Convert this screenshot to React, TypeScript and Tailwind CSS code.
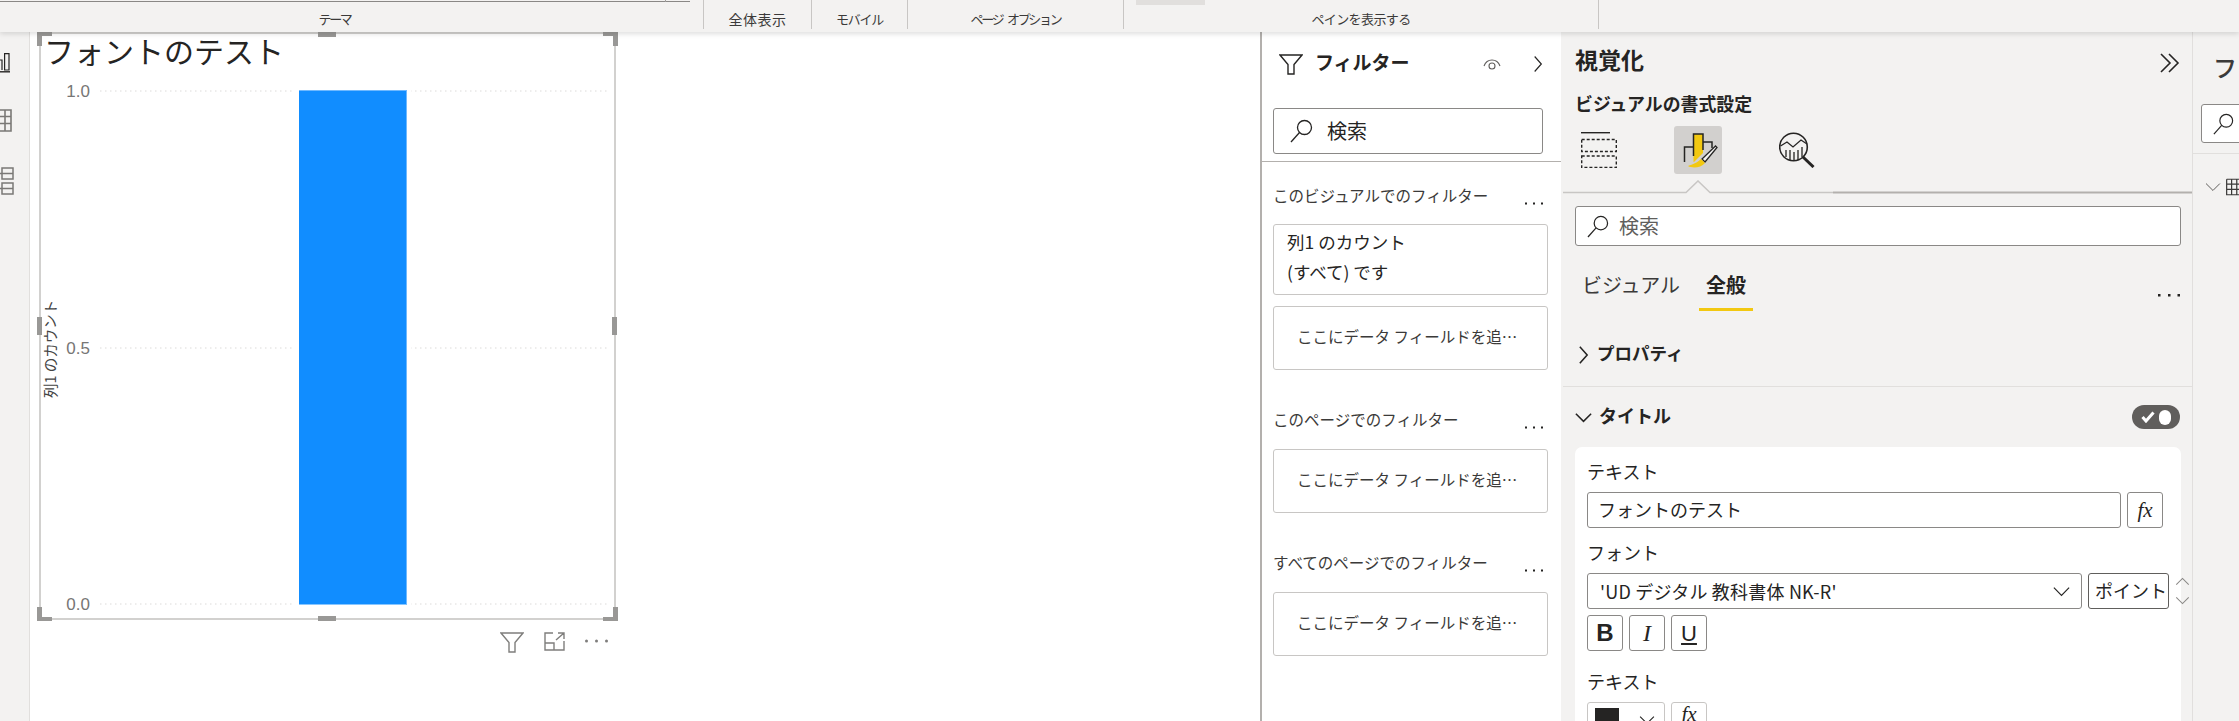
import React from "react";

const ink = "#252423";

function SearchIcon({ className = "w-[23px] h-[24px]" }: { className?: string }) {
  return (
    <svg viewBox="0 0 23 24" className={className} fill="none" stroke={ink} strokeWidth="1.3">
      <circle cx="14.5" cy="8.5" r="7" />
      <path d="M9.5 13.5 L1 23" />
    </svg>
  );
}

function Funnel({ className, color }: { className: string; color: string }) {
  return (
    <svg viewBox="0 0 24 21" className={className} fill="none" stroke={color} strokeWidth="1.4">
      <path d="M1 1 H23 L15 10.5 V20 H9 V10.5 Z" />
    </svg>
  );
}

function Dots({ color = ink }: { color?: string }) {
  return (
    <svg viewBox="0 0 18 3" className="w-[18px] h-[3px]" fill={color}>
      <rect x="0" y="0.5" width="2" height="2" />
      <rect x="8" y="0.5" width="2" height="2" />
      <rect x="16" y="0.5" width="2" height="2" />
    </svg>
  );
}

function Chevron({ dir, className, color = ink, sw = 1.5 }: { dir: "r" | "d" | "u"; className: string; color?: string; sw?: number }) {
  const d = dir === "r" ? "M2 1 L10 10 L2 19" : dir === "d" ? "M1 2 L10 11 L19 2" : "M1 11 L10 2 L19 11";
  const vb = dir === "r" ? "0 0 12 20" : "0 0 20 13";
  return (
    <svg viewBox={vb} className={className} fill="none" stroke={color} strokeWidth={sw}>
      <path d={d} />
    </svg>
  );
}

function RibbonGroup({ w, label, text }: { w: string; label: string; text: string }) {
  return (
    <div className={`${w} h-[29px] shrink-0 flex items-end justify-center leading-[20px] text-[#3b3a39] border-r border-[#c8c6c4]`}>
      <span className={`${text} whitespace-nowrap`}>{label}</span>
    </div>
  );
}

function Ribbon() {
  return (
    <div className="relative z-20 h-[32px] shrink-0 bg-[#f3f2f1] flex shadow-[0_2px_5px_rgba(0,0,0,0.13)]">
      <div className="absolute left-0 top-0 h-[2px] w-[690px] border-b border-[#8a8886]" />
      <div className="absolute left-[665px] top-0 h-[2px] w-[1px] bg-[#a19f9d]" />
      <div className="absolute left-[1136px] top-0 h-[5px] w-[69px] bg-[#e1dfdd]" />
      <RibbonGroup w="w-[704px] pr-[34px]" text="text-[13px] tracking-[-2.3px]" label="テーマ" />
      <RibbonGroup w="w-[108px]" text="text-[14px] tracking-[0.5px]" label="全体表示" />
      <RibbonGroup w="w-[96px]" text="text-[13px] tracking-[-1.2px]" label="モバイル" />
      <RibbonGroup w="w-[216px]" text="text-[13px] tracking-[-2.3px] [word-spacing:4px]" label="ページ オプション" />
      <RibbonGroup w="w-[475px]" text="text-[13px] tracking-[-0.6px]" label="ペインを表示する" />
    </div>
  );
}

function Rail() {
  return (
    <div className="w-[30px] shrink-0 bg-[#f3f2f1] border-r border-[#e1dfdd] flex flex-col overflow-hidden">
      <svg viewBox="0 0 10 20" className="w-[10px] h-[20px] mt-[21px]" fill="none" stroke="#252423" strokeWidth="1.2">
        <path d="M0 7 H2 V17 M4.6 0.6 H9 V17 H4.6 Z" />
        <path d="M0 18.8 H10" strokeWidth="1.4" />
      </svg>
      <svg viewBox="0 0 12 23" className="w-[12px] h-[23px] mt-[36px]" fill="none" stroke="#7a7876" strokeWidth="1.6">
        <path d="M0 1 H11 V22 H0 M0 7.5 H11 M0 14.5 H11 M5 1 V22" />
      </svg>
      <svg viewBox="0 0 14 28" className="w-[14px] h-[28px] mt-[35px]" fill="none" stroke="#7a7876" strokeWidth="1.5">
        <rect x="2" y="1" width="11" height="11" />
        <rect x="2" y="16" width="11" height="11" />
        <path d="M2 6.5 H13 M2 21.5 H13 M0 6.5 H2 M0 21.5 H2" />
      </svg>
    </div>
  );
}

function Handle({ className, d, w, h }: { className: string; d: string; w: number; h: number }) {
  return (
    <svg viewBox={`0 0 ${w} ${h}`} width={w} height={h} className={`absolute ${className}`} fill="#999896">
      <path d={d} />
    </svg>
  );
}

function Chart() {
  const grid = [91, 348, 604];
  return (
    <svg viewBox="39 68 575 550" className="w-[575px] h-[550px] block -ml-[2px]">
      {grid.map((y) => (
        <line key={y} x1="100" x2="609" y1={y} y2={y} stroke="#dcdbd9" strokeWidth="1" strokeDasharray="1.5 3.5" />
      ))}
      <rect x="295" y="85" width="116" height="525" fill="#ffffff" />
      <rect x="299" y="90" width="108" height="514.5" fill="#118dff" />
      <rect x="406" y="90" width="1" height="514.5" fill="#6fb9ff" />
      <rect x="299" y="90" width="108" height="1" fill="#6fb9ff" />
      <g fill="#777675" fontSize="17" textAnchor="end" fontFamily="'Liberation Sans', sans-serif">
        <text x="90" y="97">1.0</text>
        <text x="90" y="354">0.5</text>
        <text x="90" y="610">0.0</text>
      </g>
      <text transform="translate(56 398) rotate(-90)" fontSize="14.5" fill="#444444" fontFamily="'Noto Sans CJK JP', sans-serif">
        列1 のカウント
      </text>
    </svg>
  );
}

function Visual() {
  return (
    <div className="ml-[9px] w-[577px]">
      <div className="relative w-[577px] h-[588px]">
        <div className="h-full bg-white border-2 border-[#d2d1cf]">
          <div className="h-[34px] pl-[3px] text-[30px] leading-[32px] text-[#252423] whitespace-nowrap">フォントのテスト</div>
          <Chart />
        </div>
        <Handle className="-left-[2px] top-0" w={15} h={14} d="M0 0 H15 V4 H5 V14 H0 Z" />
        <Handle className="left-[564px] top-0" w={15} h={14} d="M0 0 H15 V14 H10 V4 H0 Z" />
        <Handle className="-left-[2px] top-[575px]" w={15} h={14} d="M0 0 H5 V10 H15 V14 H0 Z" />
        <Handle className="left-[564px] top-[575px]" w={15} h={14} d="M10 0 H15 V14 H0 V10 H10 Z" />
        <div className="absolute left-[279px] top-0 w-[18px] h-[5px] bg-[#999896]" />
        <div className="absolute left-[279px] top-[584px] w-[18px] h-[5px] bg-[#999896]" />
        <div className="absolute -left-[2px] top-[285px] w-[5px] h-[18px] bg-[#999896]" />
        <div className="absolute left-[573px] top-[285px] w-[5px] h-[18px] bg-[#999896]" />
      </div>
      <div className="mt-[12px] flex items-start pl-[461px]">
        <Funnel className="w-[24px] h-[21px]" color="#7f7e7c" />
        <svg viewBox="0 0 21 19" className="w-[21px] h-[19px] ml-[20px]" fill="none" stroke="#7f7e7c" strokeWidth="1.4">
          <path d="M9 1 H1 V18 H20 V9 M1 11 H10 V18 M12 8 L20 1 M14 1 H20 V7" />
        </svg>
        <svg viewBox="0 0 23 4" className="w-[23px] h-[4px] ml-[20px] mt-[7px]" fill="#7f7e7c">
          <circle cx="1.5" cy="2" r="1.5" />
          <circle cx="11.5" cy="2" r="1.5" />
          <circle cx="21.5" cy="2" r="1.5" />
        </svg>
      </div>
    </div>
  );
}

function FilterCard({ h, children }: { h: string; children: React.ReactNode }) {
  return <div className={`${h} w-[275px] shrink-0 border border-[#c8c6c4] rounded-[3px] bg-white`}>{children}</div>;
}

function AddField() {
  return (
    <FilterCard h="h-[64px]">
      <div className="pl-[23px] pt-[18px] text-[15.5px] leading-[22px] text-[#3b3a39] whitespace-nowrap">ここにデータ フィールドを追…</div>
    </FilterCard>
  );
}

function FilterHead({ title, h, pt }: { title: string; h: string; pt: string }) {
  return (
    <div className={`${h} ${pt} shrink-0 flex items-start w-[270px] text-[15.5px] leading-[22px] text-[#3b3a39] whitespace-nowrap`}>
      <span>{title}</span>
      <span className="ml-auto mt-[18px]">
        <Dots />
      </span>
    </div>
  );
}

function FilterPane() {
  return (
    <div className="w-[301px] shrink-0 bg-white border-l-2 border-[#b3b0ad] flex flex-col overflow-hidden">
      <div className="h-[64px] shrink-0 pl-[17px] flex items-center">
        <Funnel className="w-[24px] h-[21px] mt-[1px]" color={ink} />
        <span className="ml-[12px] text-[19px] font-bold text-[#252423] leading-[24px] -mt-[4px]">フィルター</span>
        <svg viewBox="0 0 18 14" className="w-[18px] h-[14px] ml-[73px]" fill="none" stroke="#605e5c" strokeWidth="1.1">
          <path d="M1 9 C4 1 14 1 17 9" />
          <circle cx="9" cy="9" r="3" />
        </svg>
        <Chevron dir="r" className="w-[10px] h-[18px] ml-[32px]" sw={1.4} />
      </div>
      <div className="ml-[11px] mt-[12px] w-[270px] h-[46px] shrink-0 border border-[#8a8886] rounded-[3px] flex items-center pl-[16px]">
        <SearchIcon />
        <span className="ml-[14px] text-[20px] text-[#252423] -mt-[1px]">検索</span>
      </div>
      <div className="mt-[7px] h-[1px] shrink-0 bg-[#b3b0ad]" />
      <div className="pl-[11px] flex flex-col">
        <FilterHead title="このビジュアルでのフィルター" h="h-[62px]" pt="pt-[22px]" />
        <FilterCard h="h-[71px]">
          <div className="pl-[13px] pt-[2px] text-[17.5px] leading-[30px] text-[#252423] whitespace-nowrap">
            <div>列1 のカウント</div>
            <div>(すべて) です</div>
          </div>
        </FilterCard>
        <div className="h-[11px] shrink-0" />
        <AddField />
        <FilterHead title="このページでのフィルター" h="h-[79px]" pt="pt-[38px]" />
        <AddField />
        <FilterHead title="すべてのページでのフィルター" h="h-[79px]" pt="pt-[38px]" />
        <AddField />
      </div>
    </div>
  );
}

function SmallButton({ children, className = "w-[36px]" }: { children: React.ReactNode; className?: string }) {
  return (
    <div className={`${className} h-[36px] shrink-0 border border-[#8a8886] rounded-[3px] bg-white flex items-center justify-center text-[#252423]`}>
      {children}
    </div>
  );
}

const Fx = () => <span className="font-['Liberation_Serif',serif] italic text-[21px] leading-none">fx</span>;

function VizPane() {
  return (
    <div className="w-[632px] shrink-0 bg-[#f3f2f1] flex flex-col overflow-hidden border-r border-[#e1dfdd]">
      <div className="h-[58px] shrink-0 pl-[14px] pr-[12px] flex items-center justify-between">
        <span className="text-[23px] font-bold leading-[30px] text-[#252423] -mt-[5px]">視覚化</span>
        <svg viewBox="0 0 20 20" className="w-[20px] h-[20px] mt-[3px]" fill="none" stroke={ink} strokeWidth="1.6">
          <path d="M1 1 L10 10 L1 19 M9 1 L18 10 L9 19" />
        </svg>
      </div>
      <div className="pl-[14px] shrink-0 text-[17.9px] font-bold leading-[24px] h-[24px] mt-[1px] text-[#252423] whitespace-nowrap">ビジュアルの書式設定</div>
      <div className="flex items-center h-[48px] shrink-0 mt-[11px] pl-[20px]">
        <svg viewBox="0 0 36 36" className="w-[36px] h-[36px] shrink-0" fill="none" stroke={ink}>
          <path d="M0 0.7 H29" strokeWidth="1.4" />
          <rect x="0.7" y="7.5" width="34.6" height="12" strokeWidth="1.4" strokeDasharray="3 2" />
          <rect x="0.7" y="24" width="34.6" height="11.5" strokeWidth="1.4" strokeDasharray="3 2" />
        </svg>
        <div className="ml-[57px] w-[48px] h-[48px] rounded-[3px] bg-[#d2d0ce]">
          <svg viewBox="0 0 48 48" className="w-[48px] h-[48px]">
            <path d="M19.5 8 H29 V27 L20 36 H19.5 Z" fill="#f2c811" />
            <path d="M19.5 30 V8 H29 V24" fill="none" stroke={ink} strokeWidth="1.5" />
            <path d="M19 21 H10.5 V36 M29 16 H38 V22" fill="none" stroke={ink} strokeWidth="1.5" />
            <path d="M41.5 20 L28 33 L31 36 L43 21.5 Z" fill="#f3f2f1" stroke={ink} strokeWidth="1.3" />
            <path d="M27 33 C23 37 19 38 14 40 C18 42.5 27 42 31 37 Z" fill="#f2c811" />
          </svg>
        </div>
        <svg viewBox="0 0 36 36" className="w-[36px] h-[36px] ml-[57px]" fill="none" stroke={ink}>
          <circle cx="14.5" cy="15" r="13.8" strokeWidth="1.6" />
          <path d="M1.5 14 L8 10 L14 15 L22 8 L28 12" strokeWidth="1.3" />
          <path d="M7 18 V25 M11 18 V28 M15 20 V28 M19 18 V28 M23 15 V25" strokeWidth="1.3" />
          <path d="M24 25 L34.5 35" strokeWidth="3" />
        </svg>
      </div>
      <svg viewBox="0 0 632 14" className="w-[632px] h-[14px] mt-[6px] shrink-0" fill="none">
        <path d="M2 12.5 H125 L137 1 L149 12.5 H272" stroke="#c8c6c4" strokeWidth="1.5" />
        <path d="M272 12.5 H632" stroke="#b3b0ad" strokeWidth="2" />
      </svg>
      <div className="ml-[14px] mt-[12px] w-[606px] h-[40px] shrink-0 bg-white border border-[#8a8886] rounded-[3px] flex items-center pl-[11px]">
        <SearchIcon className="w-[22px] h-[23px]" />
        <span className="ml-[10px] text-[20px] text-[#605e5c]">検索</span>
      </div>
      <div className="flex items-start h-[64px] shrink-0 pl-[21px] pr-[12px]">
        <span className="text-[20px] leading-[30px] mt-[24px] text-[#3b3a39]">ビジュアル</span>
        <div className="ml-[19px] w-[54px] h-[65px] flex flex-col items-center">
          <span className="text-[20px] font-bold leading-[30px] mt-[24px] text-[#252423]">全般</span>
          <div className="w-[54px] h-[3px] bg-[#f2c811] mt-[8px]" />
        </div>
        <span className="ml-auto mt-[48px]">
          <svg viewBox="0 0 22 3" className="w-[22px] h-[3px]" fill={ink}>
            <rect x="0" width="2.5" height="2.5" />
            <rect x="10" width="2.5" height="2.5" />
            <rect x="19.5" width="2.5" height="2.5" />
          </svg>
        </span>
      </div>
      <div className="h-[77px] pl-[15px] flex items-center border-b border-[#e1dfdd] shrink-0 ml-[2px]">
        <Chevron dir="r" className="w-[11px] h-[20px] mt-[14px]" sw={1.7} />
        <span className="ml-[8px] text-[17.5px] font-bold text-[#252423] mt-[10px]">プロパティ</span>
      </div>
      <div className="h-[60px] shrink-0 pl-[14px] pr-[12px] flex items-center">
        <Chevron dir="d" className="w-[17px] h-[11px]" sw={1.8} />
        <span className="ml-[7px] text-[18px] font-bold text-[#252423] -mt-[4px]">タイトル</span>
        <div className="ml-auto w-[48px] h-[24px] rounded-full bg-[#605e5c] flex items-center pl-[9px] gap-[4px]">
          <svg viewBox="0 0 14 12" className="w-[14px] h-[12px]" fill="none" stroke="white" strokeWidth="3">
            <path d="M1.5 6 L5 10 L12.5 1.5" />
          </svg>
          <div className="w-[12px] h-[15px] rounded-full bg-white" />
        </div>
      </div>
      <div className="ml-[14px] w-[606px] shrink-0 h-[300px] bg-white rounded-t-[7px] pl-[12px] text-[#252423]">
        <div className="h-[45px] pt-[10px] text-[18px] leading-[28px]">テキスト</div>
        <div className="flex gap-[6px]">
          <div className="w-[534px] h-[36px] shrink-0 border border-[#8a8886] rounded-[3px] pl-[10px] text-[18px] leading-[33px] whitespace-nowrap">フォントのテスト</div>
          <SmallButton><Fx /></SmallButton>
        </div>
        <div className="h-[45px] pt-[10px] text-[18px] leading-[28px]">フォント</div>
        <div className="flex items-start w-[610px]">
          <div className="w-[495px] h-[36px] shrink-0 border border-[#8a8886] rounded-[3px] pl-[12px] pr-[11px] flex items-center justify-between text-[18px] tracking-[0.2px] whitespace-nowrap">
            <span>'UD デジタル 教科書体 NK-R'</span>
            <Chevron dir="d" className="w-[17px] h-[11px]" sw={1.4} />
          </div>
          <div className="ml-[6px] w-[81px] h-[36px] shrink-0 border border-[#605e5c] rounded-[3px] pl-[6px] text-[18px] leading-[33px] whitespace-nowrap overflow-hidden">ポイント</div>
          <div className="ml-[6px] h-[36px] shrink-0 flex flex-col justify-between py-[4px]">
            <Chevron dir="u" className="w-[15px] h-[9px]" color="#8a8886" sw={1.5} />
            <Chevron dir="d" className="w-[15px] h-[9px]" color="#8a8886" sw={1.5} />
          </div>
        </div>
        <div className="flex gap-[6px] mt-[6px]">
          <SmallButton><span className="text-[24px] font-bold font-['Liberation_Sans',sans-serif]">B</span></SmallButton>
          <SmallButton><span className="text-[24px] italic font-['Liberation_Serif',serif]">I</span></SmallButton>
          <SmallButton><span className="text-[22px] underline font-['Liberation_Sans',sans-serif]">U</span></SmallButton>
        </div>
        <div className="h-[51px] pt-[16px] text-[18px] leading-[28px]">テキスト</div>
        <div className="flex gap-[6px]">
          <div className="w-[78px] h-[36px] shrink-0 border border-[#c8c6c4] rounded-[3px] pl-[7px] pt-[5px] flex items-start">
            <div className="w-[24px] h-[24px] shrink-0 bg-[#252423]" />
            <Chevron dir="d" className="w-[16px] h-[10px] ml-[20px] mt-[7px]" sw={1.4} />
          </div>
          <SmallButton className="w-[36px] border-[#c8c6c4]"><span className="-mt-[12px]"><Fx /></span></SmallButton>
        </div>
      </div>
    </div>
  );
}

function FieldsPane() {
  return (
    <div className="flex-1 bg-[#f3f2f1] overflow-hidden flex flex-col">
      <div className="h-[72px] shrink-0 pl-[20px] pt-[17px] text-[24px] leading-[36px] text-[#3b3a39] whitespace-nowrap font-medium">フ</div>
      <div className="ml-[8px] w-[60px] h-[39px] shrink-0 bg-white border border-[#8a8886] rounded-[3px] pl-[11px] flex items-center">
        <SearchIcon className="w-[21px] h-[22px]" />
      </div>
      <div className="mt-[10px] h-[1px] shrink-0 bg-[#e1dfdd]" />
      <div className="pl-[12px] mt-[24px] flex items-center">
        <Chevron dir="d" className="w-[17px] h-[10px]" color="#605e5c" sw={1.3} />
        <svg viewBox="0 0 14 18" className="w-[14px] h-[18px] ml-[5px]" fill="none" stroke="#3b3a39" strokeWidth="1.3">
          <path d="M0.7 0.7 H16 M0.7 0.7 V17.3 H16 M0.7 6 H16 M0.7 11.5 H16 M6 0.7 V17.3 M11.5 0.7 V17.3" />
        </svg>
      </div>
    </div>
  );
}

export default function App() {
  return (
    <div className="w-[2239px] h-[721px] overflow-hidden flex flex-col bg-white font-['Noto_Sans_CJK_JP','Noto_Sans',sans-serif]">
      <Ribbon />
      <div className="flex flex-1 min-h-0">
        <Rail />
        <div className="w-[1230px] shrink-0 bg-white">
          <Visual />
        </div>
        <FilterPane />
        <VizPane />
        <FieldsPane />
      </div>
    </div>
  );
}
